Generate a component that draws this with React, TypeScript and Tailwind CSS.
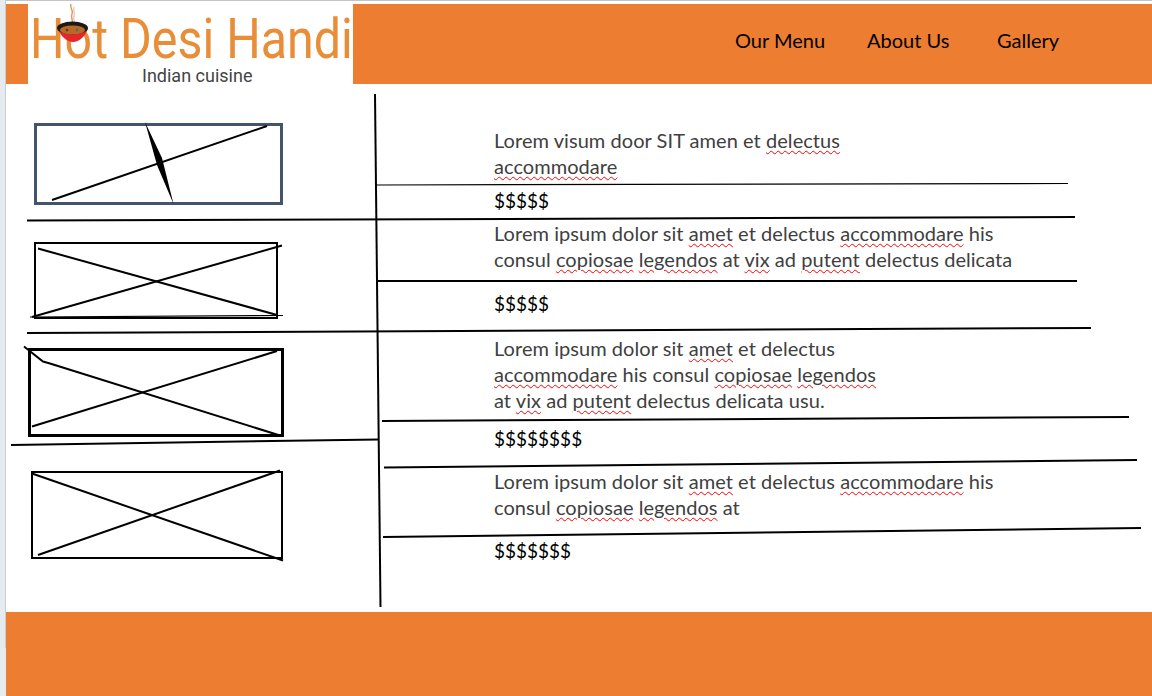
import React from 'react';

// spell-check style underline from the word processor the mockup was drawn in
const Typo: React.FC<{ children: React.ReactNode }> = ({ children }) => (
  <span className="underline decoration-wavy decoration-[#ff0000] decoration-1 underline-offset-2">{children}</span>
);

const Logo: React.FC = () => (
  <div className="relative ml-[22px] h-[80px] w-[325px] shrink-0 bg-white">
    <div className="ml-[2px] mt-[8px] w-max origin-left scale-x-[0.88] font-['Roboto',sans-serif] text-[55px] leading-[54px] whitespace-nowrap text-[#e88d38]">
      Hot Desi Handi
    </div>
    <div className="absolute top-[62px] left-[114px] font-['Roboto',sans-serif] text-[18px] leading-[20px] text-[#444444]">
      Indian cuisine
    </div>
    {/* bowl sits on top of the "o" */}
    <svg className="absolute -top-[4px] left-[28px]" width="34" height="44" viewBox="0 0 34 44">
      <path d="M15 4c-2 4 3 6 1 10s2 6 0 11" fill="none" stroke="#dc9a68" strokeWidth="1.5" />
      <path d="M18 7c-1 4 1 6 0 9s1 5 0 8" fill="none" stroke="#e6b48e" strokeWidth="1" />
      <path d="M2 28c2 8 9 14 15 14s13-6 15-14z" fill="#e8262a" />
      <ellipse cx="16.500" cy="28" rx="15.500" ry="6.500" fill="#1a1a1a" />
      <ellipse cx="16.500" cy="30" rx="12.500" ry="4.500" fill="#b9682a" />
      <circle cx="21" cy="30" r="1.200" fill="#2f7d4f" />
      <circle cx="11" cy="30" r="1.300" fill="#5b3a1c" />
    </svg>
  </div>
);

const Sketch: React.FC = () => (
  <svg className="absolute inset-0 pointer-events-none" width="1152" height="696" viewBox="0 0 1152 696" fill="none" stroke="#000">
    {/* vertical divider */}
    <path d="M375 94 380.500 607" strokeWidth="2" />
    {/* section lines */}
    <path d="M27 220.500 1075 217" strokeWidth="2" />
    <path d="M27 333 1091 328" strokeWidth="2" />
    <path d="M11 445 379 439.500" strokeWidth="2" />
    <path d="M377 185 1068 183.500" strokeWidth="1.200" />
    <path d="M378 281 1077 281" strokeWidth="2" />
    <path d="M382 421 1129 417" strokeWidth="2" />
    <path d="M384 467.500 1137 460" strokeWidth="2" />
    <path d="M383 537 1141 528" strokeWidth="2" />
    {/* crossed out pictures */}
    <path d="M52 200 267 126" strokeWidth="2" />
    <path d="M145 122 162 158 173.500 204 157 165z" fill="#000" stroke="none" />
    <path d="M38 248.500 277 315" strokeWidth="2" />
    <path d="M282 245.500 32 317" strokeWidth="2" />
    <path d="M30 317 283 315.500" strokeWidth="1.200" />
    <path d="M24 346.500 43 361.500 50 363.500 280 435.500" strokeWidth="2" />
    <path d="M32 426.500 277 351" strokeWidth="2" />
    <path d="M32 473.500 283 560.500" strokeWidth="2" />
    <path d="M38 555 280 470.500" strokeWidth="2" />
  </svg>
);

export default function App() {
  return (
    <div className="relative flex h-[696px] w-[1152px] overflow-hidden bg-white font-['Lato',sans-serif]">
      <div className="flex w-[6px] shrink-0 flex-col bg-[#e6ebef]">
        <div className="h-[648px] border-r border-[#c9ced2]" />
      </div>

      <div className="flex min-w-0 flex-1 flex-col">
        <div className="h-[4px] border-t border-[#c4c4c4]" />

        {/* Header */}
        <header className="flex h-[80px] bg-[#ed7d31]">
          <Logo />
          <nav className="flex pt-[24px] pl-[382px] text-[20px] leading-[24px] text-black whitespace-nowrap">
            <a className="w-[132px]">Our Menu</a>
            <a className="w-[130px]">About Us</a>
            <a>Gallery</a>
          </nav>
        </header>

        <main className="flex h-[528px]">
          {/* Pictures */}
          <div className="flex w-[488px] shrink-0 flex-col">
            <div className="mt-[39px] ml-[28px] h-[82px] w-[249px] border-[3px] border-[#44546a]" />
            <div className="mt-[37px] ml-[28px] h-[77px] w-[244px] border-2 border-black" />
            <div className="mt-[29px] ml-[22px] h-[89px] w-[256px] border-[3px] border-black" />
            <div className="mt-[34px] ml-[25px] h-[88px] w-[252px] border-2 border-black" />
          </div>

          {/* Dishes */}
          <div className="flex-1 text-[20px] leading-[26px] tracking-[0.05px] whitespace-nowrap">
            <p className="mt-[43px] text-[#404040]">
              Lorem visum door SIT amen et <Typo>delectus</Typo>
              <br />
              <Typo>accommodare</Typo>
            </p>
            <p className="mt-[9px] text-[19px] tracking-normal text-black">$$$$$</p>
            <p className="mt-[6px] text-[#404040]">
              Lorem ipsum dolor sit <Typo>amet</Typo> et delectus <Typo>accommodare</Typo> his
              <br />
              consul <Typo>copiosae</Typo> <Typo>legendos</Typo> at <Typo>vix</Typo> ad <Typo>putent</Typo> delectus delicata
            </p>
            <p className="mt-[19px] text-[19px] tracking-normal text-black">$$$$$</p>
            <p className="mt-[18px] text-[#404040]">
              Lorem ipsum dolor sit <Typo>amet</Typo> et delectus
              <br />
              <Typo>accommodare</Typo> his consul <Typo>copiosae</Typo> <Typo>legendos</Typo>
              <br />
              at <Typo>vix</Typo> ad <Typo>putent</Typo> delectus delicata usu.
            </p>
            <p className="mt-[13px] text-[19px] tracking-normal text-black">$$$$$$$$</p>
            <p className="mt-[16px] text-[#404040]">
              Lorem ipsum dolor sit <Typo>amet</Typo> et delectus <Typo>accommodare</Typo> his
              <br />
              consul <Typo>copiosae</Typo> <Typo>legendos</Typo> at
            </p>
            <p className="mt-[18px] text-[19px] tracking-normal text-black">$$$$$$$</p>
          </div>
        </main>

        {/* Footer */}
        <footer className="h-[84px] bg-[#ed7d31]" />
      </div>

      <Sketch />
    </div>
  );
}
